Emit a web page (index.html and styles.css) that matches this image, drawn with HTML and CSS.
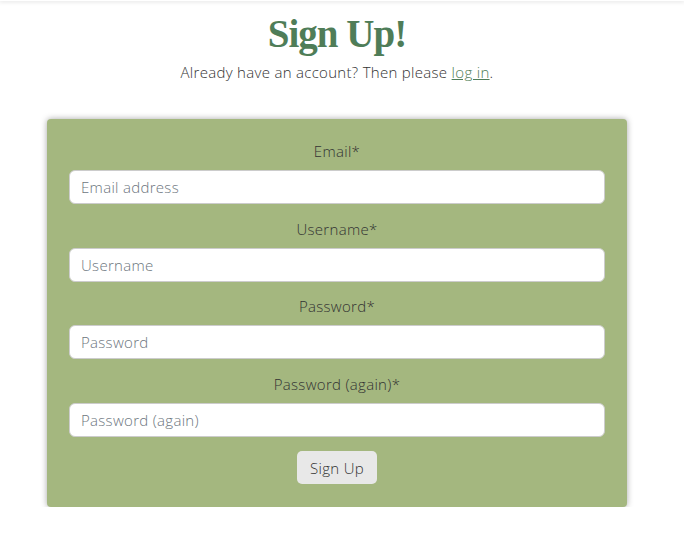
FILE: index.html
```html
<!DOCTYPE html>
<html>
<head>
<meta charset="utf-8">
<link rel="stylesheet" href="styles.css">
</head>
<body>
<div class="topbar"></div>
<main class="page">
  <h1 class="title">Sign Up!</h1>
  <p class="lead">Already have an account? Then please <a href="#" class="link">log in</a>.</p>
  <form class="card">
    <div class="group">
      <label class="label">Email*</label>
      <input class="input" type="email" placeholder="Email address">
    </div>
    <div class="group">
      <label class="label">Username*</label>
      <input class="input" type="text" placeholder="Username">
    </div>
    <div class="group">
      <label class="label">Password*</label>
      <input class="input" type="password" placeholder="Password">
    </div>
    <div class="group">
      <label class="label">Password (again)*</label>
      <input class="input" type="password" placeholder="Password (again)">
    </div>
    <div class="actions">
      <button class="btn" type="button">Sign Up</button>
    </div>
  </form>
</main>
</body>
</html>
```
FILE: styles.css
```css
* { box-sizing: border-box; }
body {
  margin: 0;
  background: #fff;
  font-family: "Open Sans", "Liberation Sans", sans-serif;
  font-weight: 300;
  color: #333;
  letter-spacing: 0.3px;
}
.topbar {
  height: 1px;
  box-shadow: 0 0 4px 1px rgba(0,0,0,0.12);
}
.page {
  display: flex;
  flex-direction: column;
  align-items: center;
  padding-right: 10px;
}
.title {
  margin: 10px 0 0;
  font-family: "Liberation Serif", "Times New Roman", serif;
  font-weight: bold;
  font-size: 39px;
  line-height: 46px;
  letter-spacing: -1px;
  color: #4f7d58;
}
.lead {
  margin: 4px 0 0;
  font-size: 15px;
  line-height: 22px;
}
.link { color: #4f7d58; text-decoration: underline; }
.card {
  margin-top: 36px;
  width: 580px;
  background: #a4b77f;
  border-radius: 4px;
  box-shadow: 0 0 6px rgba(0,0,0,0.35);
  padding: 20px 22px 23px;
}
.group {
  display: flex;
  flex-direction: column;
  align-items: center;
  margin-bottom: 12.5px;
}
.label {
  font-size: 15px;
  line-height: 24px;
  margin-bottom: 7px;
  color: #333;
}
.input {
  width: 100%;
  height: 34px;
  border: 1px solid #ccc;
  border-radius: 6px;
  background: #fff;
  padding: 0 11px;
  font-family: inherit;
  font-weight: 300;
  font-size: 15px;
  letter-spacing: 0.3px;
  color: #333;
}
.input::placeholder { color: #6c757d; }
.actions {
  display: flex;
  justify-content: center;
  padding-top: 2px;
}
.btn {
  width: 80px;
  height: 33px;
  border: none;
  border-radius: 5px;
  background: #e8e8e8;
  font-family: inherit;
  font-weight: 300;
  font-size: 15px;
  letter-spacing: 0.3px;
  color: #333;
}
```
